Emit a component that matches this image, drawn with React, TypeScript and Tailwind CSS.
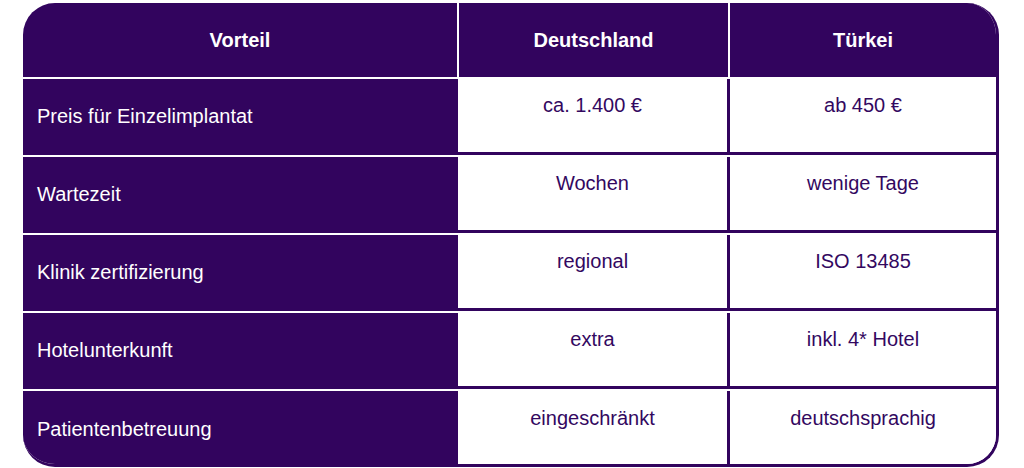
import React from "react";

const rows = [
  { label: "Preis für Einzelimplantat", de: "ca. 1.400 €", tr: "ab 450 €" },
  { label: "Wartezeit", de: "Wochen", tr: "wenige Tage" },
  { label: "Klinik zertifizierung", de: "regional", tr: "ISO 13485" },
  { label: "Hotelunterkunft", de: "extra", tr: "inkl. 4* Hotel" },
  { label: "Patientenbetreuung", de: "eingeschränkt", tr: "deutschsprachig" },
];

export default function App() {
  return (
    <div
      className="w-[1024px] h-[468px] bg-white pl-[23px] pt-[3px]"
      style={{ fontFamily: '"Liberation Sans", Arial, sans-serif' }}
    >
      <div className="w-[976px] h-[464px] rounded-[32px] overflow-hidden bg-white border-r-[3px] border-b-[3px] border-[#32045e] flex flex-col gap-[2px]">
        <div className="flex h-[74px] shrink-0 gap-[2px]">
          <div className="w-[434px] bg-[#32045e] flex items-center justify-center text-white font-bold text-[20px] leading-[23px]">
            Vorteil
          </div>
          <div className="w-[269px] bg-[#32045e] flex items-center justify-center text-white font-bold text-[20px] leading-[23px]">
            Deutschland
          </div>
          <div className="flex-1 bg-[#32045e] flex items-center justify-center text-white font-bold text-[20px] leading-[23px]">
            Türkei
          </div>
        </div>
        {rows.map((r, i) => {
          const last = i === rows.length - 1;
          return (
            <div
              key={r.label}
              className={`flex shrink-0 ${last ? "h-[73px]" : "h-[76px]"}`}
            >
              <div
                className={`w-[435px] bg-[#32045e] flex items-center pl-[14px] ${
                  last ? "pt-[4px]" : "pb-[2px]"
                } text-white text-[20px] leading-[23px]`}
              >
                {r.label}
              </div>
              <div
                className={`w-[272px] bg-white border-r-[3px] border-[#32045e] ${
                  last ? "pt-[16px]" : "border-b-[3px] pt-[15px]"
                } flex justify-center text-[#33085f] text-[20px] leading-[23px]`}
              >
                {r.de}
              </div>
              <div
                className={`flex-1 bg-white border-[#32045e] ${
                  last ? "pt-[16px]" : "border-b-[3px] pt-[15px]"
                } flex justify-center text-[#33085f] text-[20px] leading-[23px]`}
              >
                {r.tr}
              </div>
            </div>
          );
        })}
      </div>
    </div>
  );
}
